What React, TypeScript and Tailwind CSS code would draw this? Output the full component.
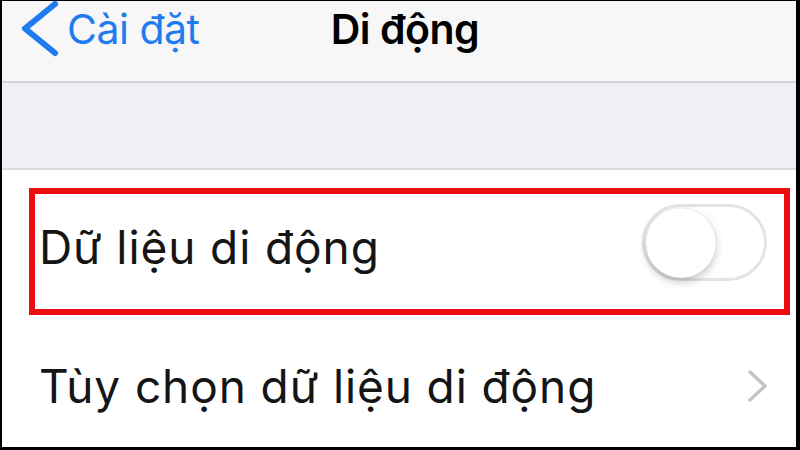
export default function App() {
  return (
    <div className="w-[800px] h-[450px] bg-black pt-px pl-[2px] pr-[4px] pb-[3px] overflow-hidden" style={{ fontFamily: "Inter, 'Liberation Sans', sans-serif" }}>
      <div className="w-full h-full flex flex-col bg-white">
        {/* Nav bar */}
        <div className="h-[82px] shrink-0 bg-[#f7f7f8] border-b-2 border-[#d2d2d6] grid grid-cols-[1fr_auto_1fr] items-center">
          <div className="flex items-center pl-[17px]">
            <svg width="42" height="58" viewBox="0 0 42 58" className="mt-[-24px]">
              <path d="M36 4 L6 28.5 L36 53" fill="none" stroke="#1f7bf0" strokeWidth="6" strokeLinecap="round" strokeLinejoin="round" />
            </svg>
            <span className="text-[41px] leading-none text-[#1f7bf0] ml-[6px] mt-[-24px] tracking-[-0.5px]">Cài đặt</span>
          </div>
          <div className="text-[41px] leading-none font-semibold text-black mt-[-24px] ml-[12px] tracking-[-0.5px]">Di động</div>
          <div />
        </div>
        {/* Grouped spacer */}
        <div className="h-[87px] shrink-0 bg-[#efeff4] border-b-2 border-[#dcdce0]" />
        {/* Rows */}
        <div className="flex-1 bg-white flex flex-col">
          <div className="mt-[18px] ml-[27px] w-[761px] h-[127px] border-[6px] border-[#ec0d12] flex items-center justify-between pl-[4px] pr-[17px]">
            <span className="text-[46px] leading-none tracking-[0.9px] text-[#151515] mt-[-10px]">Dữ liệu di động</span>
            <div className="w-[125px] h-[77px] rounded-full border-[3px] border-[#e4e4e8] bg-white flex items-center pl-px mt-[-18px]">
              <div className="w-[70px] h-[70px] rounded-full bg-white shadow-[0_4px_8px_rgba(0,0,0,0.22),0_0_1px_rgba(0,0,0,0.2)]" />
            </div>
          </div>
          <div className="flex items-center justify-between pl-[37px] pr-[27px] mt-[48px]">
            <span className="text-[46px] leading-none tracking-[0.9px] text-[#151515]">Tùy chọn dữ liệu di động</span>
            <svg width="22" height="34" viewBox="0 0 22 34">
              <path d="M3 3 L18 17 L3 31" fill="none" stroke="#c4c4c8" strokeWidth="3.5" strokeLinecap="round" strokeLinejoin="round" />
            </svg>
          </div>
        </div>
      </div>
    </div>
  );
}
